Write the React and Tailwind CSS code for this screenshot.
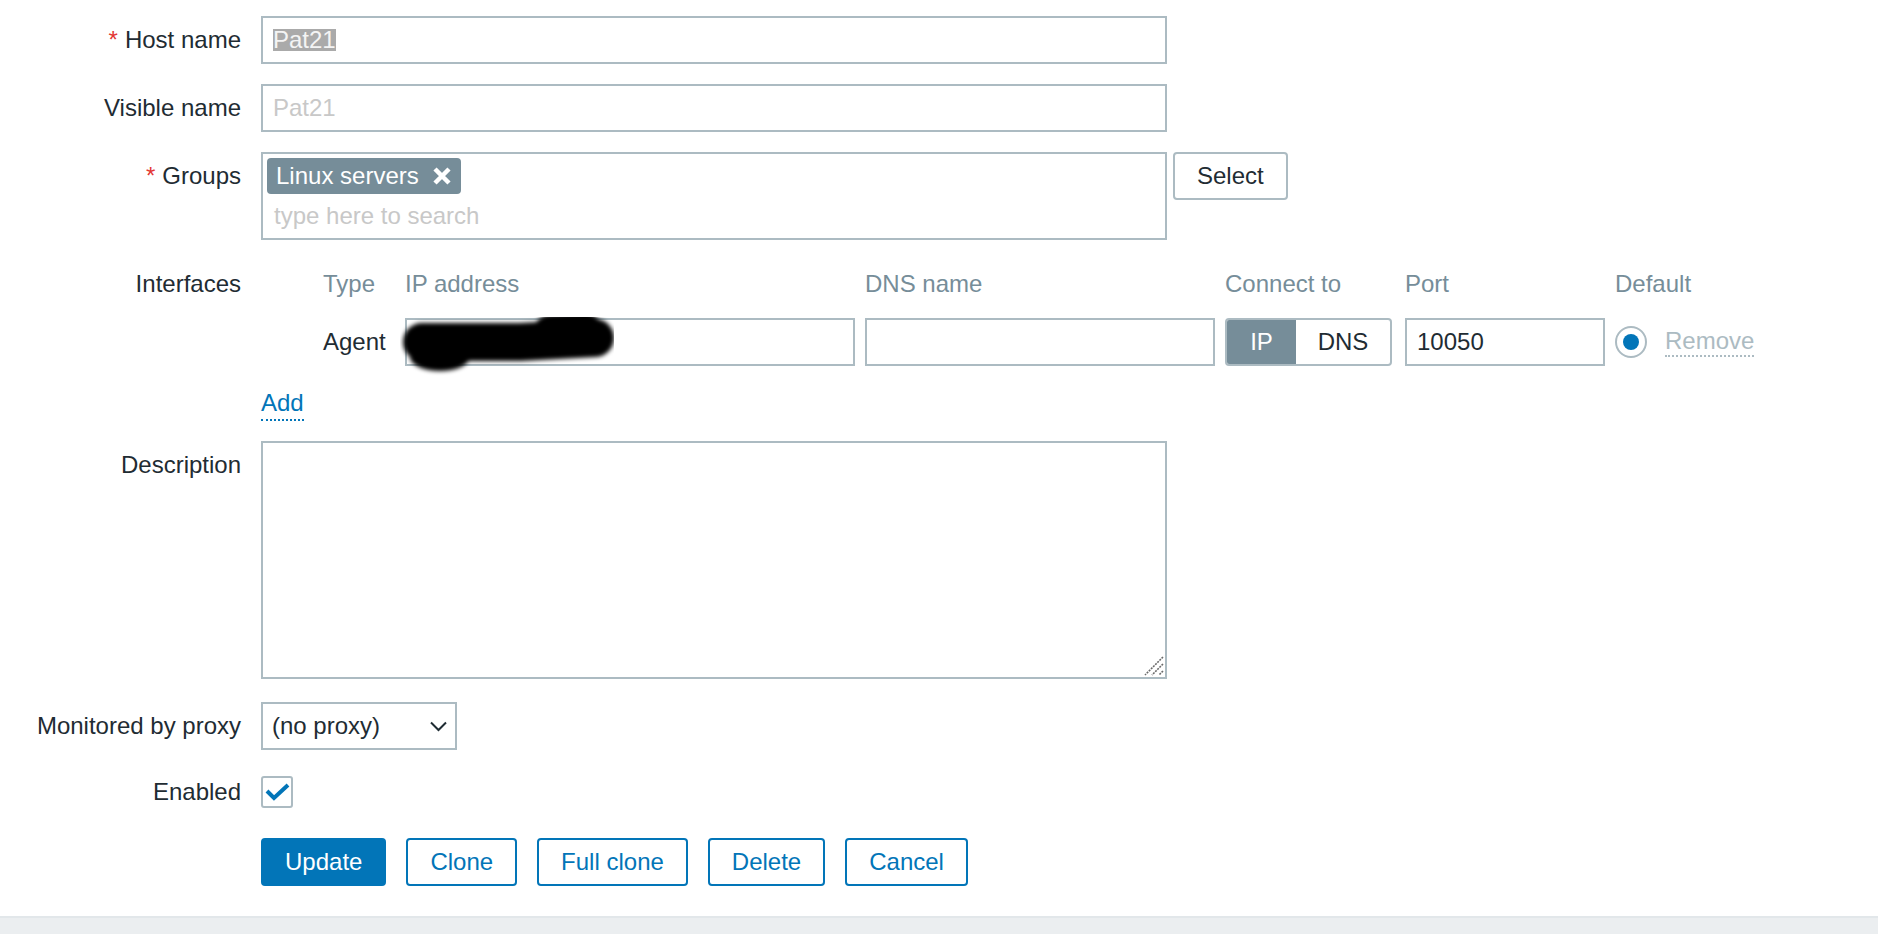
export default function App() {
  const label =
    "flex h-[48px] w-[241px] shrink-0 items-center justify-end whitespace-nowrap";
  const input = "h-[48px] w-[906px] border-2 border-[#acbbc2] bg-white";
  const btn =
    "flex h-[48px] items-center rounded-[4px] border-2 border-[#0275b8] px-[22px] text-[#0275b8] bg-white";
  return (
    <div className="relative flex h-[934px] w-full flex-col bg-white font-['Liberation_Sans',Arial,sans-serif] text-[24px] leading-normal text-[#1f2c33]">
      <div className="flex flex-col pt-[16px]">
        {/* Host name */}
        <div className="flex gap-[20px]">
          <div className={label}>
            <span className="mr-[7px] text-[#e33734]">*</span>Host name
          </div>
          <div className={input + " flex items-center px-[10px]"}>
            <span className="inline-block bg-[#aaaaaa] leading-[22px] text-[#f4f4f4]">
              Pat21
            </span>
          </div>
        </div>

        {/* Visible name */}
        <div className="mt-[20px] flex gap-[20px]">
          <div className={label}>Visible name</div>
          <div className={input + " flex items-center px-[10px] text-[#c8c8c8]"}>
            Pat21
          </div>
        </div>

        {/* Groups */}
        <div className="mt-[20px] flex gap-[20px]">
          <div className={label}>
            <span className="mr-[7px] text-[#e33734]">*</span>Groups
          </div>
          <div className="flex">
            <div className="flex h-[88px] w-[906px] flex-col border-2 border-[#acbbc2] px-[4px] pt-[4px]">
              <div className="flex">
                <div className="flex h-[36px] items-center rounded-[4px] bg-[#768d99] pl-[9px] pr-[10px] text-white">
                  <span>Linux servers</span>
                  <svg
                    className="ml-[14px]"
                    width="18"
                    height="18"
                    viewBox="0 0 18 18"
                  >
                    <path
                      d="M2 2 L16 16 M16 2 L2 16"
                      stroke="white"
                      strokeWidth="4.5"
                      strokeLinecap="butt"
                    />
                  </svg>
                </div>
              </div>
              <div className="flex h-[44px] items-center px-[7px] text-[#c8c8c8]">
                type here to search
              </div>
            </div>
            <div className="ml-[6px] flex h-[48px] items-center rounded-[4px] border-2 border-[#acbbc2] px-[22px]">
              Select
            </div>
          </div>
        </div>

        {/* Interfaces */}
        <div className="mt-[20px] flex gap-[20px]">
          <div className={label}>Interfaces</div>
          <div className="flex flex-col">
            <div className="flex h-[48px] items-center text-[#768d99]">
              <div className="w-[62px]" />
              <div className="w-[82px]">Type</div>
              <div className="w-[460px]">IP address</div>
              <div className="w-[360px]">DNS name</div>
              <div className="w-[180px]">Connect to</div>
              <div className="w-[210px]">Port</div>
              <div>Default</div>
            </div>
            <div className="mt-[10px] flex h-[48px] items-center">
              <div className="w-[62px]" />
              <div className="w-[82px]">Agent</div>
              <div className="relative h-[48px] w-[450px] border-2 border-[#acbbc2]">
                <svg
                  className="absolute left-[-7px] top-[-8px]"
                  width="230"
                  height="72"
                  viewBox="0 0 230 72"
                >
                  <defs>
                    <filter id="blur" x="-10%" y="-30%" width="120%" height="160%">
                      <feGaussianBlur stdDeviation="2.2" />
                    </filter>
                  </defs>
                  <g filter="url(#blur)">
                    <path
                      d="M22 30 L120 30 L195 26"
                      fill="none"
                      stroke="black"
                      strokeWidth="38"
                      strokeLinecap="round"
                      strokeLinejoin="round"
                    />
                    <path
                      d="M150 20 L185 18"
                      fill="none"
                      stroke="black"
                      strokeWidth="34"
                      strokeLinecap="round"
                    />
                    <ellipse cx="40" cy="45" rx="30" ry="14" fill="black" />
                  </g>
                </svg>
              </div>
              <div className="ml-[10px] h-[48px] w-[350px] border-2 border-[#acbbc2]" />
              <div className="ml-[10px] flex h-[48px] w-[167px] overflow-hidden rounded-[4px] border-2 border-[#acbbc2]">
                <div className="flex w-[69px] items-center justify-center bg-[#768d99] text-white">
                  IP
                </div>
                <div className="flex flex-1 items-center justify-center">DNS</div>
              </div>
              <div className="ml-[13px] flex h-[48px] w-[200px] items-center border-2 border-[#acbbc2] px-[10px]">
                10050
              </div>
              <div className="ml-[10px] flex h-[32px] w-[32px] items-center justify-center rounded-full border-2 border-[#acbbc2]">
                <div className="h-[16px] w-[16px] rounded-full bg-[#0275b8]" />
              </div>
              <span className="ml-[18px] border-b-2 border-dotted border-[#acbbc2] leading-[28px] text-[#acbbc2]">
                Remove
              </span>
            </div>
            <div className="mt-[23px] flex">
              <span className="border-b-2 border-dotted border-[#0275b8] pb-[2px] leading-[28px] text-[#0275b8]">
                Add
              </span>
            </div>
          </div>
        </div>

        {/* Description */}
        <div className="mt-[20px] flex gap-[20px]">
          <div className={label}>Description</div>
          <div className="relative h-[238px] w-[906px] border-2 border-[#acbbc2]">
            <svg
              className="absolute bottom-[1px] right-[1px]"
              width="20"
              height="20"
              viewBox="0 0 20 20"
            >
              <path
                d="M19 1 L1 19 M19 8 L8 19 M19 15 L15 19"
                stroke="#6b6b6b"
                strokeWidth="1.6"
                strokeDasharray="2 1"
              />
            </svg>
          </div>
        </div>

        {/* Proxy */}
        <div className="mt-[23px] flex gap-[20px]">
          <div className={label}>Monitored by proxy</div>
          <div className="flex h-[48px] w-[196px] items-center justify-between border-2 border-[#acbbc2] pl-[9px] pr-[8px]">
            <span>(no proxy)</span>
            <svg width="17" height="11" viewBox="0 0 17 11">
              <path
                d="M1 1.5 L8.5 9 L16 1.5"
                fill="none"
                stroke="#1f2c33"
                strokeWidth="2"
              />
            </svg>
          </div>
        </div>

        {/* Enabled */}
        <div className="mt-[26px] flex gap-[20px]">
          <div className="flex h-[32px] w-[241px] shrink-0 items-center justify-end">
            Enabled
          </div>
          <div className="relative h-[32px] w-[32px] rounded-[3px] border-2 border-[#acbbc2]">
            <svg
              className="absolute left-[-2px] top-[-2px]"
              width="32"
              height="32"
              viewBox="0 0 32 32"
            >
              <path
                d="M6 15 L13 22 L27 9"
                fill="none"
                stroke="#0275b8"
                strokeWidth="4"
              />
            </svg>
          </div>
        </div>

        {/* Buttons */}
        <div className="mt-[30px] flex gap-[20px]">
          <div className="w-[241px] shrink-0" />
          <div className="flex gap-[20px]">
            <div className="flex h-[48px] items-center rounded-[4px] border-2 border-[#0275b8] bg-[#0275b8] px-[22px] text-white">
              Update
            </div>
            <div className={btn}>Clone</div>
            <div className={btn}>Full clone</div>
            <div className={btn}>Delete</div>
            <div className={btn}>Cancel</div>
          </div>
        </div>
      </div>
      <div className="flex-1" />
      <div className="h-[18px] border-t-2 border-[#e2e7ea] bg-[#ebeef0]" />
    </div>
  );
}
